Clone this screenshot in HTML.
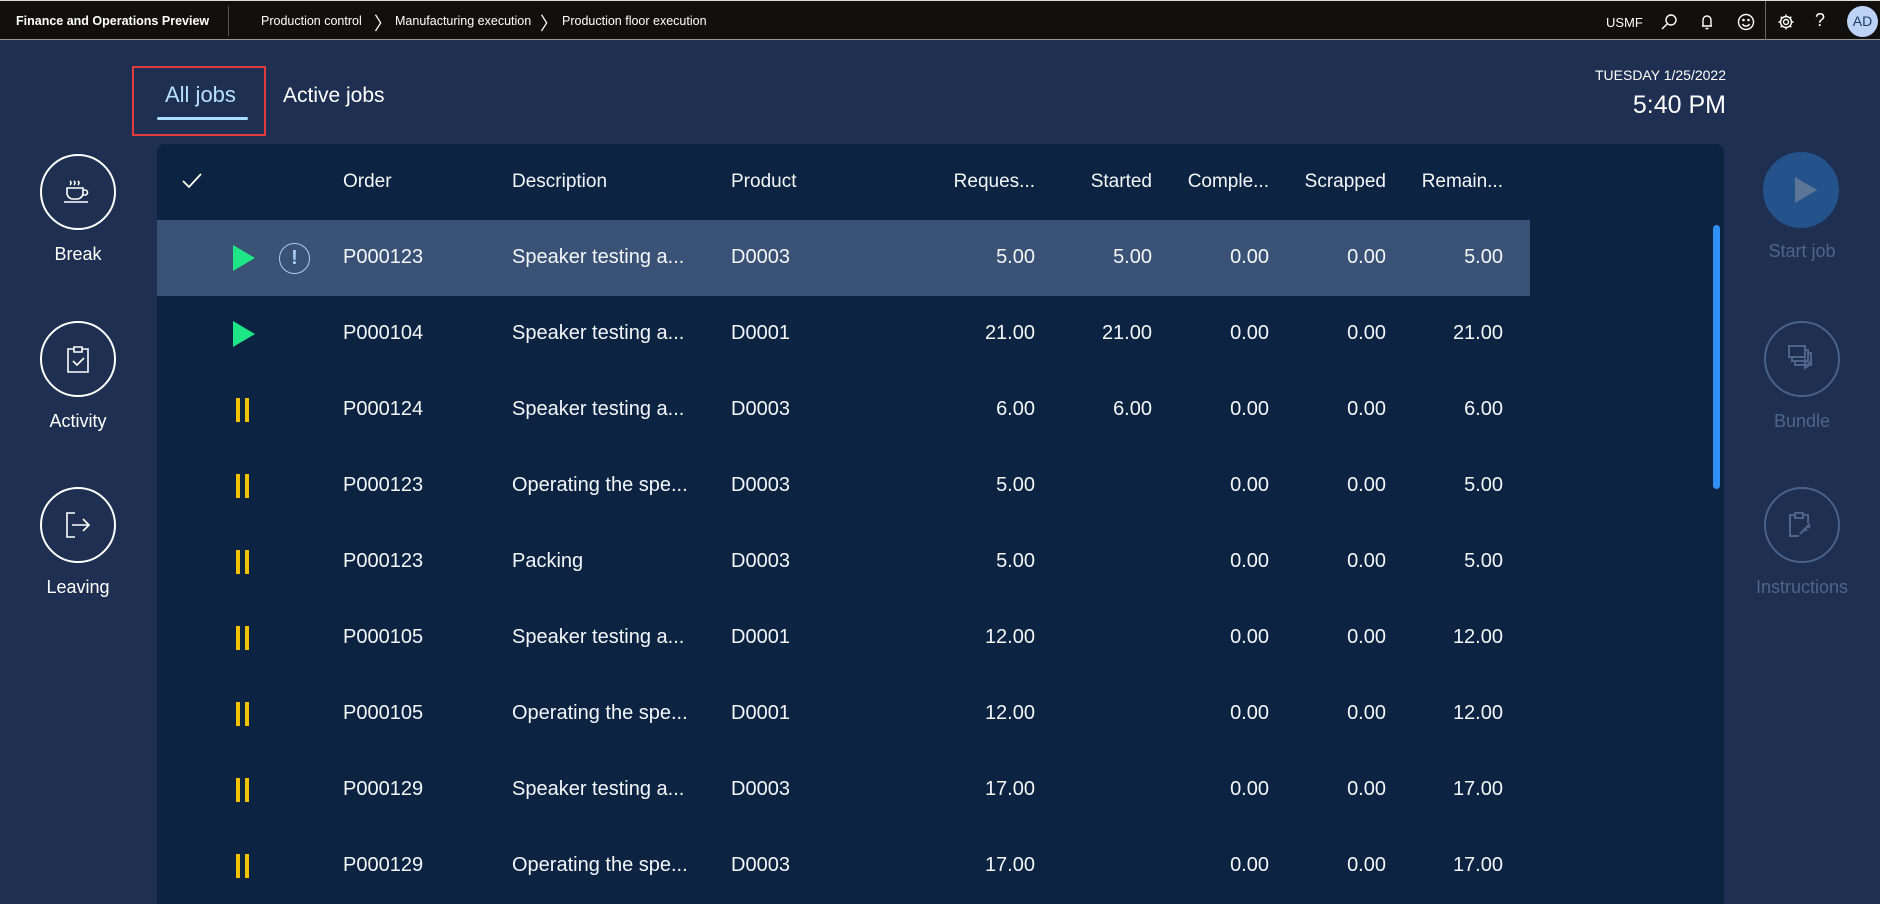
<!DOCTYPE html>
<html><head><meta charset="utf-8"><style>
*{margin:0;padding:0;box-sizing:border-box}
body{width:1880px;height:899px;overflow:hidden;background:#1e2f52;font-family:"Liberation Sans",sans-serif;color:#fff;position:relative}
.top{position:absolute;left:0;top:0;width:1880px;height:40px;background:#11100f;border-top:1px solid #ddd;border-bottom:1px solid #999}
.top div,.top span{position:absolute;font-size:12.5px;top:13px}
.abs{position:absolute}
.panel{position:absolute;left:157px;top:144px;width:1567px;height:760px;background:#0c2342;border-radius:8px 8px 0 0}
.cell{position:absolute;font-size:20px;white-space:nowrap;color:#f4f6fa}
.r{text-align:right}
.circ{position:absolute;width:76px;height:76px;border-radius:50%;border:2px solid #fff}
.lbl{position:absolute;font-size:18px;width:160px;text-align:center}
.dim{border-color:#4a6188;color:#4e6589}
.pause{position:absolute;width:13px;height:24px;border-left:4px solid #f2c200;border-right:4px solid #f2c200}
.play{position:absolute;width:0;height:0;border-left:22px solid #1ee686;border-top:13px solid transparent;border-bottom:13px solid transparent}
</style></head><body>
<div class="top">
<div style="left:16px;font-weight:bold">Finance and Operations Preview</div>
<div style="left:228px;top:5px;width:1px;height:30px;background:#555"></div>
<div style="left:261px">Production control</div>
<div style="left:374px;top:9px;font-size:18px">〉</div>
<div style="left:395px">Manufacturing execution</div>
<div style="left:540px;top:9px;font-size:18px">〉</div>
<div style="left:562px">Production floor execution</div>
<div style="left:1606px;top:14px;font-size:13px">USMF</div>
<svg class="abs" style="left:1660px;top:12px" width="18" height="18" viewBox="0 0 18 18" fill="none" stroke="#fff" stroke-width="1.4"><circle cx="11" cy="7" r="5"/><path d="M7.5 10.5L2 16"/></svg>
<svg class="abs" style="left:1699px;top:12px" width="16" height="18" viewBox="0 0 16 18" fill="none" stroke="#fff" stroke-width="1.4"><path d="M4 13V7a4 4 0 018 0v6H3h10M6.5 15.5h3"/></svg>
<svg class="abs" style="left:1737px;top:12px" width="18" height="18" viewBox="0 0 18 18" fill="none" stroke="#fff" stroke-width="1.4"><circle cx="9" cy="9" r="7.5"/><circle cx="6.5" cy="7" r=".6" fill="#fff"/><circle cx="11.5" cy="7" r=".6" fill="#fff"/><path d="M5.5 11a4 4 0 007 0"/></svg>
<div style="left:1765px;top:0;width:1px;height:39px;background:#666"></div>
<svg class="abs" style="left:1777px;top:12px" width="18" height="18" viewBox="0 0 18 18" fill="none" stroke="#fff" stroke-width="1.4"><circle cx="9" cy="9" r="2.5"/><path d="M9 1.5v2.5M9 14v2.5M1.5 9H4M14 9h2.5M3.7 3.7l1.8 1.8M12.5 12.5l1.8 1.8M3.7 14.3l1.8-1.8M12.5 5.5l1.8-1.8"/><circle cx="9" cy="9" r="5.5"/></svg>
<div style="left:1815px;top:9px;font-size:18px">?</div>
<div style="left:1847px;top:5px;width:31px;height:31px;border-radius:50%;background:#bcd3f5;color:#1e3a66;font-size:14px;text-align:center;line-height:31px">AD</div>
</div>

<div class="abs" style="left:132px;top:66px;width:134px;height:70px;border:2px solid #e23b3b"></div>
<div class="abs" style="left:165px;top:82px;font-size:22px;color:#b6e0ff">All jobs</div>
<div class="abs" style="left:157px;top:117px;width:91px;height:3px;background:#a9dcff;border-radius:2px"></div>
<div class="abs" style="left:283px;top:84px;font-size:21px">Active jobs</div>
<div class="abs r" style="right:154px;top:67px;font-size:14px">TUESDAY 1/25/2022</div>
<div class="abs r" style="right:154px;top:91px;font-size:25px">5:40 PM</div>

<div class="circ" style="left:40px;top:154px"></div>
<svg class="abs" style="left:62px;top:178px" width="30" height="28" viewBox="0 0 30 28" fill="none" stroke="#fff" stroke-width="1.6"><path d="M5 10h16v5a6 6 0 01-6 6h-4a6 6 0 01-6-6zM21 12h2a2.5 2.5 0 010 5h-2.5M2 24h24M8 3q2 2 0 4M12 3q2 2 0 4M16 3q2 2 0 4"/></svg>
<div class="lbl" style="left:-2px;top:244px">Break</div>
<div class="circ" style="left:40px;top:321px"></div>
<svg class="abs" style="left:66px;top:344px" width="24" height="30" viewBox="0 0 24 30" fill="none" stroke="#fff" stroke-width="1.6"><path d="M8 5H2v23h20V5h-6M8 3h8v5H8zM7 17l4 4 7-7"/></svg>
<div class="lbl" style="left:-2px;top:411px">Activity</div>
<div class="circ" style="left:40px;top:487px"></div>
<svg class="abs" style="left:64px;top:510px" width="28" height="30" viewBox="0 0 28 30" fill="none" stroke="#fff" stroke-width="1.6"><path d="M11 3H3v24h8M8 15h17M19 9l6 6-6 6"/></svg>
<div class="lbl" style="left:-2px;top:577px">Leaving</div>

<div class="circ" style="left:1763px;top:152px;background:#24528a;border-color:#24528a"></div>
<div class="abs" style="left:1795px;top:177px;border-left:22px solid #5d7596;border-top:13px solid transparent;border-bottom:13px solid transparent"></div>
<div class="lbl dim" style="left:1722px;top:241px">Start job</div>
<div class="circ dim" style="left:1764px;top:321px"></div>
<svg class="abs" style="left:1787px;top:344px" width="30" height="28" viewBox="0 0 30 28" fill="none" stroke="#4e6589" stroke-width="2"><path d="M2 2h16v11H2zM5 14v3h16V6h-3M8 18v3h16V9h-3M18 16l6 4-6 4z"/></svg>
<div class="lbl dim" style="left:1722px;top:411px">Bundle</div>
<div class="circ dim" style="left:1764px;top:487px"></div>
<svg class="abs" style="left:1788px;top:510px" width="28" height="30" viewBox="0 0 28 30" fill="none" stroke="#4e6589" stroke-width="2"><path d="M7 5H2v21h9M15 5h5v8M7 3h8v5H7zM12 24l10-10M16 18l3 3M19 15l3 3"/></svg>
<div class="lbl dim" style="left:1722px;top:577px">Instructions</div>

<div class="panel"></div>
<div class="abs" style="left:157px;top:220px;width:1373px;height:76px;background:#3a5275"></div>
<div class="abs" style="left:1713px;top:225px;width:7px;height:264px;background:#2f8ff5;border-radius:4px"></div>

<svg class="abs" style="left:181px;top:172px" width="22" height="18" viewBox="0 0 22 18" fill="none" stroke="#fff" stroke-width="1.8"><path d="M2 9l6 6L20 2"/></svg>
<div id="hdr"></div>
<div id="rows"></div>
<script>
var H=[["Order",343,0],["Description",512,0],["Product",731,0],["Reques...",1035,1],["Started",1152,1],["Comple...",1269,1],["Scrapped",1386,1],["Remain...",1503,1]];
var s="";H.forEach(function(h){s+='<div class="cell'+(h[2]?' r':'')+'" style="top:171px;font-size:19px;'+(h[2]?'right:'+(1880-h[1])+'px':'left:'+h[1]+'px')+'">'+h[0]+'</div>';});
document.getElementById('hdr').innerHTML=s;
var R=[["p","P000123","Speaker testing a...","D0003","5.00","5.00","0.00","0.00","5.00",1],
["p","P000104","Speaker testing a...","D0001","21.00","21.00","0.00","0.00","21.00"],
["s","P000124","Speaker testing a...","D0003","6.00","6.00","0.00","0.00","6.00"],
["s","P000123","Operating the spe...","D0003","5.00","","0.00","0.00","5.00"],
["s","P000123","Packing","D0003","5.00","","0.00","0.00","5.00"],
["s","P000105","Speaker testing a...","D0001","12.00","","0.00","0.00","12.00"],
["s","P000105","Operating the spe...","D0001","12.00","","0.00","0.00","12.00"],
["s","P000129","Speaker testing a...","D0003","17.00","","0.00","0.00","17.00"],
["s","P000129","Operating the spe...","D0003","17.00","","0.00","0.00","17.00"]];
var o="";R.forEach(function(r,i){var c=258+i*76;var t=c-12;
o+=r[0]=="p"?'<div class="play" style="left:233px;top:'+(c-13)+'px"></div>':'<div class="pause" style="left:236px;top:'+(c-12)+'px"></div>';
if(r[9])o+='<div class="abs" style="left:279px;top:'+(c-15)+'px;width:31px;height:31px;border:1.5px solid #a9cdf0;border-radius:50%;color:#a9cdf0;text-align:center;font-size:20px;line-height:28px;font-weight:bold">!</div>';
[[r[1],343],[r[2],512],[r[3],731]].forEach(function(x){o+='<div class="cell" style="top:'+t+'px;left:'+x[1]+'px">'+x[0]+'</div>';});
[[r[4],1035],[r[5],1152],[r[6],1269],[r[7],1386],[r[8],1503]].forEach(function(x){o+='<div class="cell r" style="top:'+t+'px;right:'+(1880-x[1])+'px">'+x[0]+'</div>';});
});
document.getElementById('rows').innerHTML=o;
</script>
</body></html>
